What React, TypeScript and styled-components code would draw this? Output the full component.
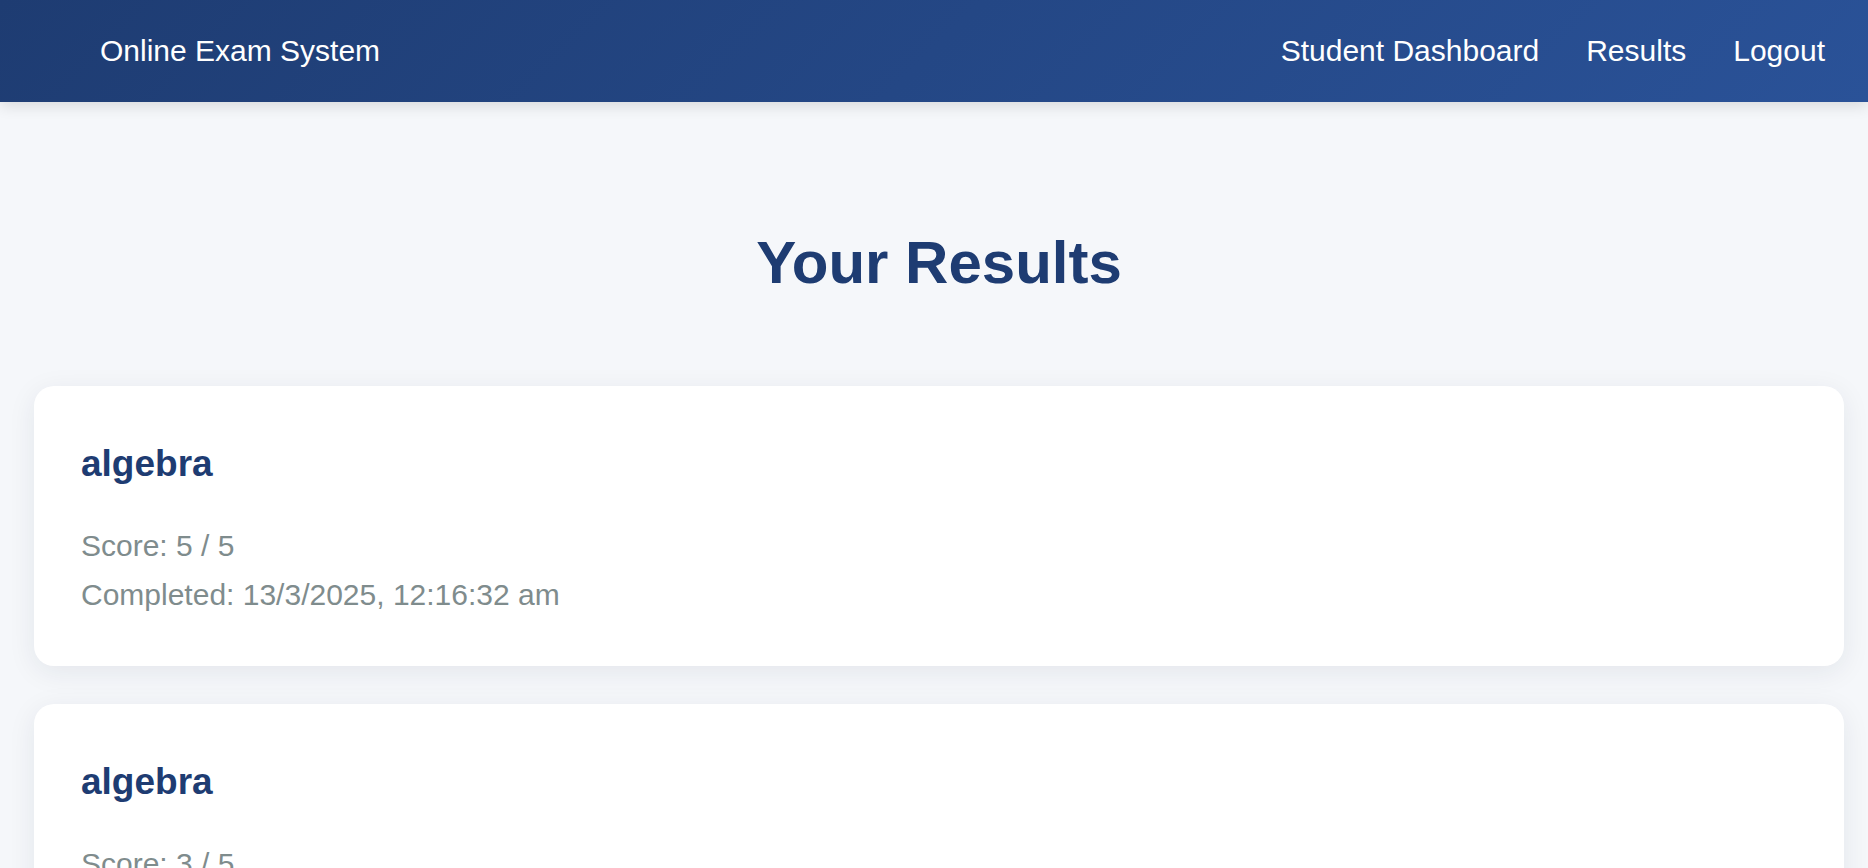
import React from "react";
import styled, { createGlobalStyle } from "styled-components";

const GlobalStyle = createGlobalStyle`
  * { box-sizing: border-box; }
  html, body {
    margin: 0;
    padding: 0;
    background: #f5f7fa;
    font-family: "Liberation Sans", Arial, sans-serif;
  }
`;

const Header = styled.header`
  height: 102px;
  display: flex;
  align-items: center;
  justify-content: space-between;
  padding: 0 43px 0 100px;
  background: linear-gradient(135deg, #1e3c72, #2a5298);
  box-shadow: 0 4px 14px rgba(0, 0, 0, 0.12);
  color: #ffffff;
  position: relative;
  z-index: 1;
`;

const Brand = styled.div`
  font-size: 30px;
  color: #ffffff;
`;

const Nav = styled.nav`
  display: flex;
  align-items: center;
  gap: 47px;
`;

const NavLink = styled.a`
  font-size: 30px;
  color: #ffffff;
  text-decoration: none;
  cursor: pointer;
`;

const Main = styled.main`
  padding: 126px 24px 40px 34px;
`;

const Title = styled.h1`
  margin: 0 0 89px;
  text-align: center;
  font-size: 60px;
  font-weight: 700;
  line-height: normal;
  color: #1e3c72;
`;

const List = styled.div`
  display: flex;
  flex-direction: column;
  gap: 38px;
`;

const Card = styled.section`
  background: #ffffff;
  border-radius: 20px;
  padding: 45px 47px 47px;
  box-shadow: 0 6px 28px rgba(30, 40, 70, 0.08);
`;

const ExamName = styled.h3`
  margin: 12px 0 36px;
  font-size: 37px;
  font-weight: 700;
  line-height: normal;
  color: #1e3c72;
`;

const Detail = styled.p`
  margin: 0;
  font-size: 30px;
  line-height: 49px;
  color: #7f8c8d;
`;

const results = [
  { name: "algebra", score: 5, total: 5, completed: "13/3/2025, 12:16:32 am" },
  { name: "algebra", score: 3, total: 5, completed: "13/3/2025, 12:10:05 am" },
];

export default function App() {
  return (
    <>
      <GlobalStyle />
      <Header>
        <Brand>Online Exam System</Brand>
        <Nav>
          <NavLink>Student Dashboard</NavLink>
          <NavLink>Results</NavLink>
          <NavLink>Logout</NavLink>
        </Nav>
      </Header>
      <Main>
        <Title>Your Results</Title>
        <List>
          {results.map((r, i) => (
            <Card key={i}>
              <ExamName>{r.name}</ExamName>
              <Detail>
                Score: {r.score} / {r.total}
              </Detail>
              <Detail>Completed: {r.completed}</Detail>
            </Card>
          ))}
        </List>
      </Main>
    </>
  );
}
